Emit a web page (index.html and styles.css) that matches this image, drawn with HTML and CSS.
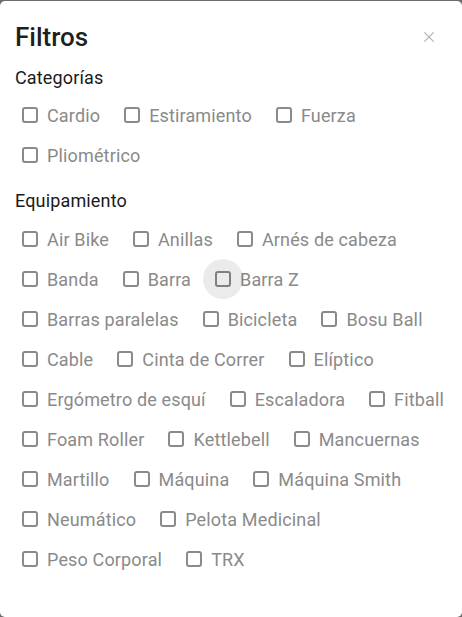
FILE: index.html
```html
<!DOCTYPE html>
<html lang="es">
<head>
    <meta charset="UTF-8">
    <meta name="viewport" content="width=device-width, initial-scale=1.0">
    <title>Filtros</title>
    <link rel="stylesheet" href="styles.css">
</head>
<body>
    <div class="dialog">
        <header class="dialog-header">
            <h1>Filtros</h1>
            <button class="close" aria-label="Cerrar">
                <svg viewBox="0 0 24 24" width="14" height="14"><path d="M4 4L20 20M20 4L4 20" stroke="currentColor" stroke-width="2.2" fill="none"/></svg>
            </button>
        </header>

        <h2>Categorías</h2>
        <div class="options">
            <label class="option"><span class="box"></span>Cardio</label>
            <label class="option"><span class="box"></span>Estiramiento</label>
            <label class="option"><span class="box"></span>Fuerza</label>
            <label class="option"><span class="box"></span>Pliométrico</label>
        </div>

        <h2 class="second">Equipamiento</h2>
        <div class="options equipment">
            <label class="option"><span class="box"></span>Air Bike</label>
            <label class="option"><span class="box"></span>Anillas</label>
            <label class="option"><span class="box"></span>Arnés de cabeza</label>
            <label class="option"><span class="box"></span>Banda</label>
            <label class="option"><span class="box"></span>Barra</label>
            <label class="option"><span class="box hover"></span>Barra Z</label>
            <label class="option"><span class="box"></span>Barras paralelas</label>
            <label class="option"><span class="box"></span>Bicicleta</label>
            <label class="option"><span class="box"></span>Bosu Ball</label>
            <label class="option"><span class="box"></span>Cable</label>
            <label class="option"><span class="box"></span>Cinta de Correr</label>
            <label class="option"><span class="box"></span>Elíptico</label>
            <label class="option"><span class="box"></span>Ergómetro de esquí</label>
            <label class="option"><span class="box"></span>Escaladora</label>
            <label class="option"><span class="box"></span>Fitball</label>
            <label class="option"><span class="box"></span>Foam Roller</label>
            <label class="option"><span class="box"></span>Kettlebell</label>
            <label class="option"><span class="box"></span>Mancuernas</label>
            <label class="option"><span class="box"></span>Martillo</label>
            <label class="option"><span class="box"></span>Máquina</label>
            <label class="option"><span class="box"></span>Máquina Smith</label>
            <label class="option"><span class="box"></span>Neumático</label>
            <label class="option"><span class="box"></span>Pelota Medicinal</label>
            <label class="option"><span class="box"></span>Peso Corporal</label>
            <label class="option"><span class="box"></span>TRX</label>
        </div>
    </div>
</body>
</html>
```

FILE: styles.css
```css
html, body {
    margin: 0;
    padding: 0;
    height: 100%;
}
body {
    background-color: #6b6b6b;
    font-family: Roboto, "Liberation Sans", sans-serif;
    padding-top: 1px;
    box-sizing: border-box;
}
.dialog {
    background-color: white;
    border-radius: 5px;
    height: 616px;
    box-sizing: border-box;
    padding: 19px 6px 0 15px;
}
.dialog-header {
    display: flex;
    justify-content: space-between;
    align-items: center;
}
.dialog-header h1 {
    margin: 0;
    font-size: 26px;
    font-weight: 500;
    line-height: 34px;
    color: #1f1f1f;
}
.close {
    border: none;
    background: none;
    color: #b4b4b4;
    padding: 0;
    margin-right: 20px;
    width: 14px;
    height: 14px;
    display: flex;
}
h2 {
    margin: 12px 0 5px 0;
    font-size: 18px;
    font-weight: 400;
    line-height: 24px;
    letter-spacing: 0.15px;
    color: #1a1a1a;
}
h2.second {
    margin-top: 14px;
    margin-bottom: 6px;
}
.options {
    display: flex;
    flex-wrap: wrap;
    column-gap: 24px;
    padding-left: 7px;
}
.option {
    display: flex;
    align-items: center;
    height: 40px;
    font-size: 18px;
    letter-spacing: 0.15px;
    color: #8a8a8a;
    cursor: pointer;
}
.box {
    position: relative;
    width: 16px;
    height: 16px;
    box-sizing: border-box;
    border: 2px solid #8a8a8a;
    border-radius: 3px;
    margin-right: 9px;
}
.box.hover::before {
    content: "";
    position: absolute;
    left: -14px;
    top: -14px;
    width: 40px;
    height: 40px;
    border-radius: 50%;
    background-color: rgba(0, 0, 0, 0.08);
}
```
